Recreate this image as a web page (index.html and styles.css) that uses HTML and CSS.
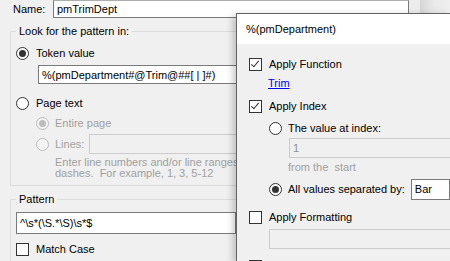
FILE: index.html
```html
<!DOCTYPE html>
<html lang="en">
<head>
    <meta charset="UTF-8">
    <meta name="viewport" content="width=device-width, initial-scale=1.0">
    <title>Token - pmTrimDept</title>
    <link rel="stylesheet" href="styles.css">
</head>
<body>

<div id="token-dialog">
    <div class="name-row">
        <span class="name-label">Name:</span>
        <div class="textbox name-box">pmTrimDept</div>
        <div class="name-edge"></div>
    </div>

    <fieldset class="group look-group">
        <legend>Look for the pattern in:</legend>
        <div class="opt token-opt"><span class="radio on"></span>Token value</div>
        <div class="textbox token-box">%(pmDepartment#@Trim@##[ | ]#)</div>
        <div class="opt page-opt"><span class="radio"></span>Page text</div>
        <div class="opt sub-opt disabled"><span class="radio on"></span>Entire page</div>
        <div class="opt lines-opt disabled">
            <span class="radio"></span><span class="lines-label">Lines:</span>
            <div class="textbox off lines-box"></div>
        </div>
        <div class="help">Enter line numbers and/or line ranges separated by commas or<br>dashes.&nbsp; For example, 1, 3, 5-12</div>
    </fieldset>

    <fieldset class="group pattern-group">
        <legend>Pattern</legend>
        <div class="textbox pattern-box">^\s*(\S.*\S)\s*$</div>
        <div class="opt match-opt"><span class="check"></span>Match Case</div>
    </fieldset>
</div>

<div id="param-popup">
    <div class="popup-title">%(pmDepartment)</div>
    <div class="popup-body">
        <div class="opt fn-opt"><span class="check on"></span>Apply Function</div>
        <a class="fn-link" href="#">Trim</a>
        <div class="opt index-opt"><span class="check on"></span>Apply Index</div>
        <div class="opt value-opt"><span class="radio"></span>The value at index:</div>
        <div class="textbox off index-box">1</div>
        <div class="note">from the&nbsp; start</div>
        <div class="opt all-opt">
            <span class="radio on"></span><span class="all-label">All values separated by:</span>
            <div class="textbox sep-box">Bar</div>
        </div>
        <div class="opt format-opt"><span class="check"></span>Apply Formatting</div>
        <div class="textbox off format-box"></div>
        <div class="opt next-opt"><span class="check"></span></div>
    </div>
</div>

</body>
</html>
```

FILE: styles.css
```css
body {
    margin: 0;
    width: 450px;
    height: 261px;
    overflow: hidden;
    position: relative;
    background-color: #f0f0f0;
    color: #000000;
    font-family: 'Liberation Sans', Arial, sans-serif;
    font-size: 11px;
    line-height: 14px;
}

#token-dialog {
    width: 450px;
    height: 261px;
    overflow: hidden;
}

.textbox {
    box-sizing: border-box;
    background-color: #ffffff;
    border: 1px solid #7a7a7a;
    padding: 0 3px;
    display: flex;
    align-items: center;
    white-space: nowrap;
    overflow: hidden;
}

.textbox.off {
    background-color: #f0f0f0;
    border-color: #cccccc;
    color: #8d8d8d;
}

.opt {
    display: flex;
    align-items: center;
    height: 14px;
    gap: 7px;
    white-space: nowrap;
}

.radio,
.check {
    box-sizing: border-box;
    flex: none;
    width: 13px;
    height: 13px;
    background-color: #ffffff;
    border: 1px solid #333333;
    position: relative;
}

.radio {
    border-radius: 50%;
}

.radio.on::after {
    content: '';
    position: absolute;
    left: 2px;
    top: 2px;
    width: 7px;
    height: 7px;
    border-radius: 50%;
    background-color: #333333;
}

.check.on::after {
    content: '';
    position: absolute;
    left: 3px;
    top: 0px;
    width: 3px;
    height: 7px;
    border: solid #333333;
    border-width: 0 1px 1px 0;
    transform: rotate(40deg);
}

.disabled {
    color: #a0a0a0;
}

.disabled .radio {
    border-color: #bcbcbc;
    background-color: #f4f4f4;
}

.disabled .radio.on::after {
    background-color: #bcbcbc;
}

/* main dialog */

.name-row {
    display: flex;
    align-items: center;
    height: 18px;
}

.name-label {
    width: 40px;
    padding-left: 13px;
}

.name-box {
    width: 356px;
    height: 18px;
    border-top-color: #adadad;
}

.name-edge {
    flex: 1;
    align-self: stretch;
    background: linear-gradient(to right, #ececec 0 11px, #d6d6d6 11px, #e9e9e9 60%, #efefef);
}

.group {
    margin: 7px 0 0 10px;
    width: 430px;
    box-sizing: border-box;
    border: 1px solid #dcdcdc;
    padding: 0 0 0 5px;
}

.group legend {
    padding: 0 3px;
    line-height: 13px;
}

.look-group {
    padding-top: 8px;
    padding-bottom: 6px;
}

.token-box {
    margin: 5px 0 0 22px;
    width: 200px;
    height: 19px;
}

.page-opt {
    margin-top: 12px;
}

.sub-opt {
    margin: 6px 0 0 20px;
    gap: 6px;
}

.lines-opt {
    margin: 4px 0 0 20px;
    height: 20px;
    gap: 6px;
}

.lines-label {
    width: 28px;
}

.lines-box {
    width: 150px;
    height: 20px;
}

.help {
    margin: 3px 0 0 39px;
    width: 182px;
    overflow: hidden;
    line-height: 11px;
    color: #a0a0a0;
    white-space: nowrap;
}

.pattern-group {
    padding-top: 6px;
    padding-bottom: 10px;
}

.pattern-box {
    width: 220px;
    height: 22px;
}

.match-opt {
    margin-top: 8px;
}

/* function popup over the dialog */

#param-popup {
    position: absolute;
    left: 236px;
    top: 13px;
    width: 214px;
    height: 248px;
    box-sizing: border-box;
    overflow: hidden;
    border: 1px solid #646464;
    border-width: 1px 0 0 1px;
    background-color: #f0f0f0;
    box-shadow: -3px 2px 7px rgba(0, 0, 0, 0.22);
}

.popup-title {
    height: 30px;
    display: flex;
    align-items: center;
    padding-left: 9px;
    background-color: #ffffff;
}

.popup-body {
    padding: 13px 0 0 12px;
}

.fn-link {
    display: block;
    width: fit-content;
    margin: 5px 0 0 19px;
    color: #0000ee;
    text-decoration: underline;
}

.index-opt {
    margin-top: 9px;
}

.value-opt {
    margin: 8px 0 0 20px;
    gap: 6px;
}

.index-box {
    margin: 3px 0 0 40px;
    width: 170px;
    height: 20px;
}

.note {
    margin: 2px 0 0 39px;
    color: #a0a0a0;
}

.all-opt {
    margin: 5px 0 0 20px;
    height: 20px;
    gap: 6px;
}

.all-label {
    width: 118px;
}

.sep-box {
    width: 50px;
    height: 21px;
}

.format-opt {
    margin-top: 11px;
}

.format-box {
    margin: 5px 0 0 20px;
    width: 190px;
    height: 20px;
}

.next-opt {
    margin-top: 10px;
}
```
